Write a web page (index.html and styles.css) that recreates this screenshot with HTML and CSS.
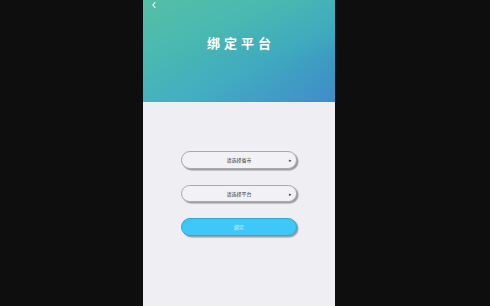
FILE: index.html
```html
<!DOCTYPE html>
<html lang="zh">
<head>
<meta charset="utf-8">
<link rel="stylesheet" href="styles.css">
</head>
<body>
<div class="stage">
  <div class="phone">
    <header class="hero">
      <svg class="back" width="6" height="8" viewBox="0 0 6 8"><path d="M4 1.5 L1.8 4 L4 6.5" fill="none" stroke="#fff" stroke-width="1.1" stroke-linecap="round" stroke-linejoin="round"/></svg>
      <h1 class="title">绑定平台</h1>
    </header>
    <main class="content">
      <div class="select"><span class="label">请选择省市</span><span class="arrow">&#9656;</span></div>
      <div class="select"><span class="label">请选择平台</span><span class="arrow">&#9656;</span></div>
      <div class="submit">绑定</div>
    </main>
  </div>
</div>
</body>
</html>
```
FILE: styles.css
```css
html, body { margin: 0; padding: 0; }
body { background: #0e0e0e; font-family: "Noto Sans CJK SC", "Noto Sans", sans-serif; }
.stage { height: 306px; padding-left: 143px; }
.phone { width: 192px; height: 306px; display: flex; flex-direction: column; background: #efeef3; }
.hero {
  height: 102px;
  position: relative;
  background:
    linear-gradient(180deg, rgba(255,255,255,0) 55%, rgba(90,200,210,0.18) 100%),
    linear-gradient(155deg, #55c0a6 0%, #48b8b2 35%, #3fa9bf 62%, #3a80c6 100%);
  display: flex; justify-content: center; align-items: flex-start;
}
.back { position: absolute; left: 8px; top: 1px; }
.title { margin: 34px 0 0 4px; color: #fff; font-size: 13px; font-weight: 700; letter-spacing: 4px; line-height: 18px; }
.content { display: flex; flex-direction: column; align-items: center; padding-top: 49px; gap: 16px; }
.select, .submit {
  width: 116px; height: 17.5px; border-radius: 9px; box-sizing: border-box;
  display: flex; align-items: center; justify-content: center; position: relative;
  font-size: 5px; box-shadow: 1.5px 1.5px 1px rgba(0,0,0,0.35);
}
.select { background: #f2f2f6; border: 1px solid #aaa; color: #333; }
.arrow { position: absolute; right: 4px; font-size: 5px; color: #444; }
.submit { background: #3fc7f8; border: 1px solid #2fa8d8; color: #d9f4ff; }
```
